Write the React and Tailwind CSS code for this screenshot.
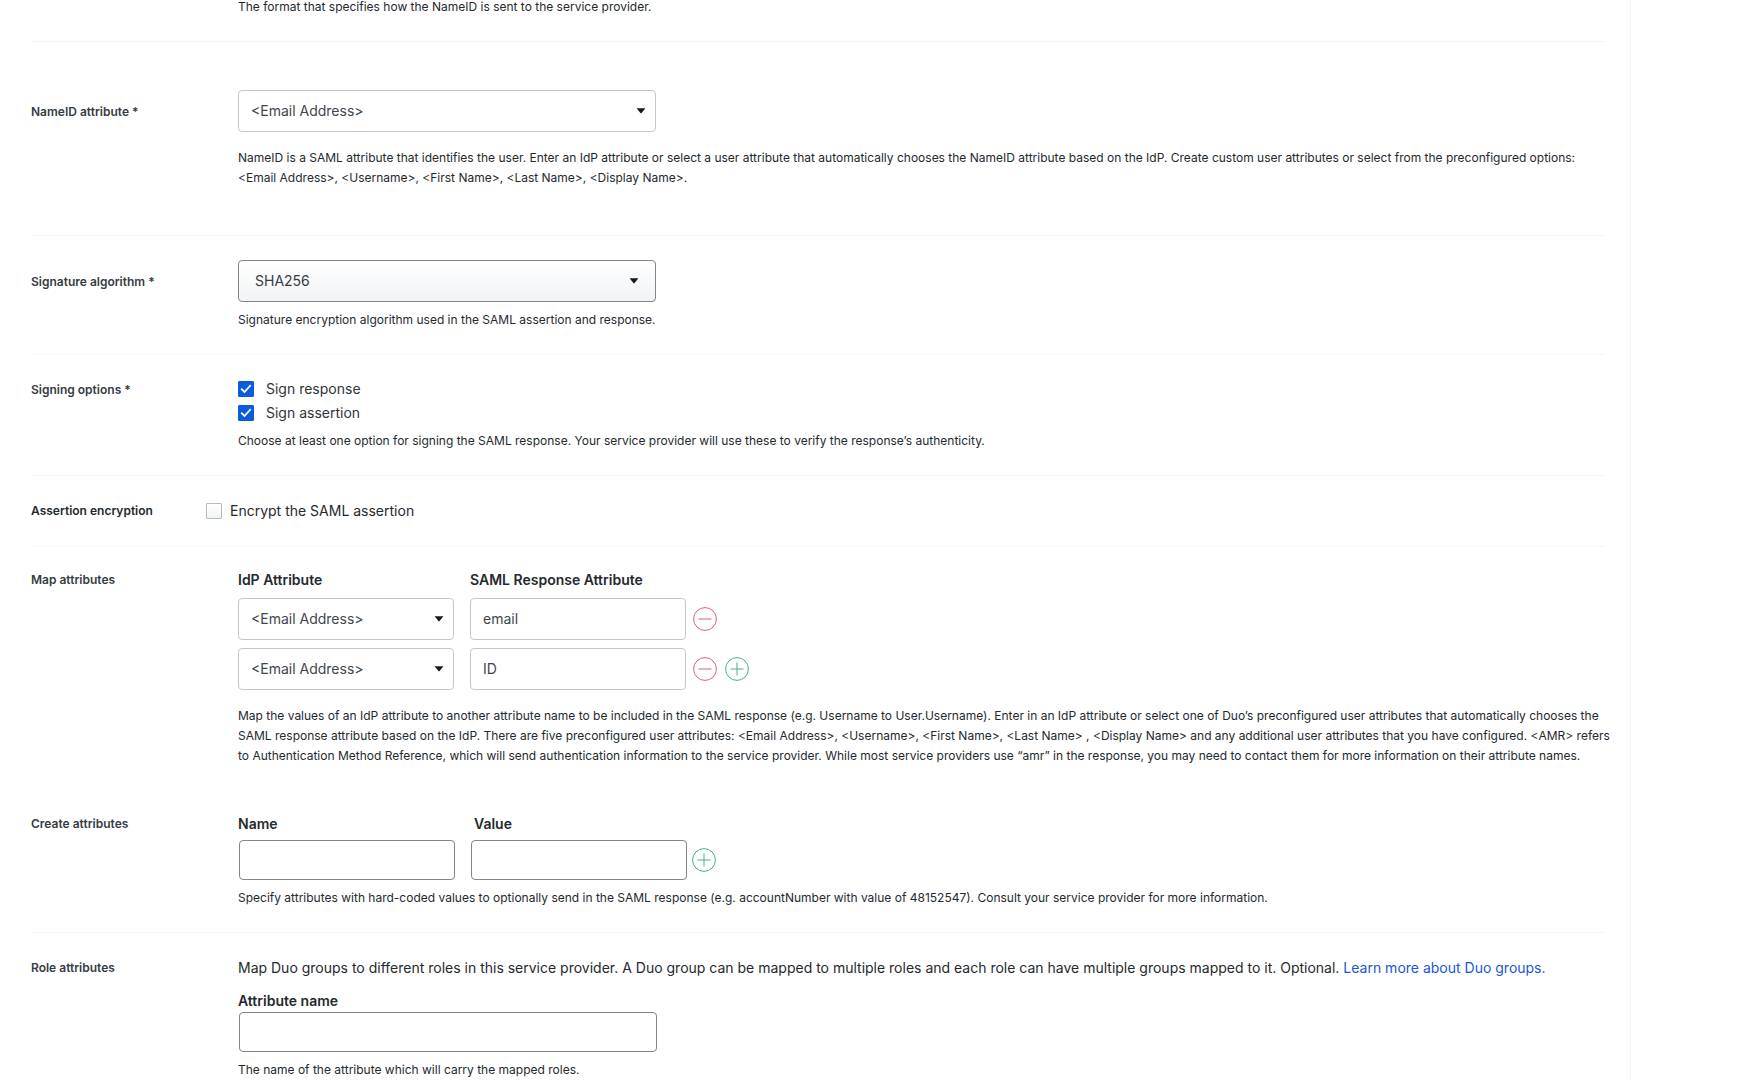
import React, { useState } from 'react';

const userAttributes = ['<Email Address>', '<Username>', '<First Name>', '<Last Name>', '<Display Name>'];

const Caret = () => (
  <svg viewBox="0 0 10 6" className="w-[10px] h-[6px] fill-[#16191d]" aria-hidden="true">
    <path d="M0.6 0.3h8.8L5.6 4.9a0.8 0.8 0 0 1-1.2 0z" />
  </svg>
);

const Help = ({ children, className = '' }) => (
  <p className={`text-xs leading-5 text-[#25292e] ${className}`}>{children}</p>
);

const Row = ({ label, htmlFor, labelClass = '', className = '', children }) => (
  <div className={`flex ${className}`}>
    <div className={`w-[207px] shrink-0 text-xs leading-5 font-semibold text-[#363c43] ${labelClass}`}>
      {htmlFor ? <label htmlFor={htmlFor}>{label}</label> : label}
    </div>
    <div className="flex-1 min-w-0">{children}</div>
  </div>
);

const AttributeSelect = ({ id, label, value, onChange, className }) => (
  <div className={`grid items-center ${className}`}>
    <select
      id={id}
      aria-label={label}
      value={value}
      onChange={(e) => onChange(e.target.value)}
      className="col-start-1 row-start-1 w-full h-[42px] appearance-none rounded border border-[#c4c6c9] bg-white pl-3 pr-8 text-sm text-[#3f464e]"
    >
      {userAttributes.map((attr) => (
        <option key={attr}>{attr}</option>
      ))}
    </select>
    <span className="col-start-1 row-start-1 justify-self-end pr-[10px] pointer-events-none">
      <Caret />
    </span>
  </div>
);

const CheckOption = ({ label, checked, onChange }) => (
  <label className="flex items-center gap-3 h-6 text-sm text-[#30353b]">
    <span className="grid place-items-center">
      <input
        type="checkbox"
        checked={checked}
        onChange={(e) => onChange(e.target.checked)}
        className="col-start-1 row-start-1 w-4 h-4 appearance-none rounded-[1px] border border-[#b4bac1] bg-white checked:bg-[#0b5be0] checked:border-[#0b5be0]"
      />
      {checked && (
        <svg viewBox="0 0 16 16" className="col-start-1 row-start-1 w-4 h-4 pointer-events-none" aria-hidden="true">
          <path d="M3.2 7.6l3.3 3.4 6.2-6.8" fill="none" stroke="#fff" strokeWidth="1.8" />
        </svg>
      )}
    </span>
    {label}
  </label>
);

const IconButton = ({ type, label, onClick }) => (
  <button
    type="button"
    aria-label={label}
    onClick={onClick}
    className={type === 'add' ? 'text-[#48b27e]' : 'text-[#d9626c]'}
  >
    <svg viewBox="0 0 24 24" className="block w-6 h-6" fill="none" stroke="currentColor" aria-hidden="true">
      <circle cx="12" cy="12" r="11.4" />
      <path d={type === 'add' ? 'M5.5 12h13M12 5.5v13' : 'M5.5 12h13'} />
    </svg>
  </button>
);

const Divider = () => <hr className="border-0 h-px bg-[#f5f6f7]" />;

const App = () => {
  const [nameId, setNameId] = useState('<Email Address>');
  const [algorithm, setAlgorithm] = useState('SHA256');
  const [signing, setSigning] = useState({ response: true, assertion: true });
  const [encrypt, setEncrypt] = useState(false);
  const [mappings, setMappings] = useState([
    { idp: '<Email Address>', saml: 'email' },
    { idp: '<Email Address>', saml: 'ID' }
  ]);

  const updateMapping = (index, change) => {
    setMappings(mappings.map((m, i) => (i === index ? { ...m, ...change } : m)));
  };

  const removeMapping = (index) => {
    setMappings(mappings.filter((_, i) => i !== index));
  };

  const addMapping = () => {
    setMappings([...mappings, { idp: '<Email Address>', saml: '' }]);
  };

  return (
    <div className="min-h-screen bg-white font-['Inter',sans-serif]">
      <form
        onSubmit={(e) => e.preventDefault()}
        className="mr-[119px] border-r border-[#f3f4f5] pl-[31px] pr-[25px]"
      >
        <Row className="pb-6 -mt-[3px]">
          <Help>The format that specifies how the NameID is sent to the service provider.</Help>
        </Row>
        <Divider />

        <Row label="NameID attribute *" htmlFor="nameid" labelClass="pt-3" className="pt-12 pb-[47px]">
          <AttributeSelect id="nameid" value={nameId} onChange={setNameId} className="w-[418px]" />
          <Help className="mt-4">
            NameID is a SAML attribute that identifies the user. Enter an IdP attribute or select a user attribute that
            automatically chooses the NameID attribute based on the IdP. Create custom user attributes or select from the
            preconfigured options: &lt;Email Address&gt;, &lt;Username&gt;, &lt;First Name&gt;, &lt;Last Name&gt;,
            &lt;Display Name&gt;.
          </Help>
        </Row>
        <Divider />

        <Row label="Signature algorithm *" htmlFor="algorithm" labelClass="pt-3" className="py-6">
          <div className="grid items-center w-[418px]">
            <select
              id="algorithm"
              value={algorithm}
              onChange={(e) => setAlgorithm(e.target.value)}
              className="col-start-1 row-start-1 w-full h-[42px] appearance-none rounded border border-[#7f868e] bg-linear-to-b from-white to-[#f1f3f5] pl-4 pr-8 text-sm text-[#363c43]"
            >
              <option>SHA256</option>
              <option>SHA1</option>
            </select>
            <span className="col-start-1 row-start-1 justify-self-end pr-[17px] pointer-events-none">
              <Caret />
            </span>
          </div>
          <Help className="mt-2">Signature encryption algorithm used in the SAML assertion and response.</Help>
        </Row>
        <Divider />

        <Row label="Signing options *" labelClass="pt-[3px]" className="pt-[22px] pb-6">
          <CheckOption
            label="Sign response"
            checked={signing.response}
            onChange={(checked) => setSigning({ ...signing, response: checked })}
          />
          <CheckOption
            label="Sign assertion"
            checked={signing.assertion}
            onChange={(checked) => setSigning({ ...signing, assertion: checked })}
          />
          <Help className="mt-[6px]">
            Choose at least one option for signing the SAML response. Your service provider will use these to verify the
            response’s authenticity.
          </Help>
        </Row>
        <Divider />

        <div className="flex items-center h-[70px]">
          <div className="w-[175px] text-xs leading-5 font-semibold text-[#25292e]">Assertion encryption</div>
          <label className="flex items-center gap-2 text-sm text-[#25292e]">
            <input
              type="checkbox"
              checked={encrypt}
              onChange={(e) => setEncrypt(e.target.checked)}
              className="w-4 h-4 appearance-none rounded-[1px] border border-[#b4bac1] bg-linear-to-b from-white to-[#f1f3f5] checked:bg-[#0b5be0]"
            />
            Encrypt the SAML assertion
          </label>
        </div>
        <Divider />

        <Row label="Map attributes" className="pt-[23px] pb-12">
          <div className="flex gap-4 text-sm leading-5 font-semibold text-[#25292e]">
            <div className="w-[216px]">IdP Attribute</div>
            <div className="w-[216px]">SAML Response Attribute</div>
          </div>
          <div className="mt-2 flex flex-col gap-2">
            {mappings.map((mapping, i) => (
              <div key={i} className="flex items-center">
                <AttributeSelect
                  label="IdP Attribute"
                  value={mapping.idp}
                  onChange={(idp) => updateMapping(i, { idp })}
                  className="w-[216px]"
                />
                <input
                  type="text"
                  aria-label="SAML Response Attribute"
                  value={mapping.saml}
                  onChange={(e) => updateMapping(i, { saml: e.target.value })}
                  className="ml-4 w-[216px] h-[42px] rounded border border-[#c4c6c9] px-3 pb-0.5 text-sm text-[#3f464e]"
                />
                <div className="ml-[7px] flex gap-2">
                  <IconButton type="remove" label="Remove attribute" onClick={() => removeMapping(i)} />
                  {i === mappings.length - 1 && <IconButton type="add" label="Add attribute" onClick={addMapping} />}
                </div>
              </div>
            ))}
          </div>
          <Help className="mt-4 -mr-3">
            Map the values of an IdP attribute to another attribute name to be included in the SAML response (e.g.
            Username to User.Username). Enter in an IdP attribute or select one of Duo’s preconfigured user attributes
            that automatically chooses the SAML response attribute based on the IdP. There are five preconfigured user
            attributes: &lt;Email Address&gt;, &lt;Username&gt;, &lt;First Name&gt;, &lt;Last Name&gt; , &lt;Display
            Name&gt; and any additional user attributes that you have configured. &lt;AMR&gt; refers to Authentication
            Method Reference, which will send authentication information to the service provider. While most service
            providers use “amr” in the response, you may need to contact them for more information on their attribute
            names.
          </Help>
        </Row>

        <Row label="Create attributes" className="pb-6">
          <div className="flex gap-5 text-sm leading-5 font-semibold text-[#25292e]">
            <label htmlFor="attr-name" className="w-[216px]">Name</label>
            <label htmlFor="attr-value">Value</label>
          </div>
          <div className="mt-[6px] pl-px flex items-center">
            <input id="attr-name" type="text" className="w-[216px] h-10 rounded border border-[#7f868e] px-3 text-sm" />
            <input
              id="attr-value"
              type="text"
              className="ml-4 mr-[5px] w-[216px] h-10 rounded border border-[#7f868e] px-3 text-sm"
            />
            <IconButton type="add" label="Create attribute" />
          </div>
          <Help className="mt-2">
            Specify attributes with hard-coded values to optionally send in the SAML response (e.g. accountNumber with
            value of 48152547). Consult your service provider for more information.
          </Help>
        </Row>
        <Divider />

        <Row label="Role attributes" className="pt-[25px]">
          <p className="text-sm leading-5 text-[#25292e]">
            Map Duo groups to different roles in this service provider. A Duo group can be mapped to multiple roles and
            each role can have multiple groups mapped to it. Optional.{' '}
            <a href="#duo-groups" className="text-[#1a56db]">Learn more about Duo groups.</a>
          </p>
          <label htmlFor="role-name" className="block mt-[13px] text-sm leading-5 font-semibold text-[#25292e]">
            Attribute name
          </label>
          <div className="mt-px pl-px">
            <input
              id="role-name"
              type="text"
              className="block w-[418px] h-10 rounded border border-[#7f868e] px-3 text-sm"
            />
          </div>
          <Help className="mt-2">The name of the attribute which will carry the mapped roles.</Help>
        </Row>
      </form>
    </div>
  );
};

export default App;
